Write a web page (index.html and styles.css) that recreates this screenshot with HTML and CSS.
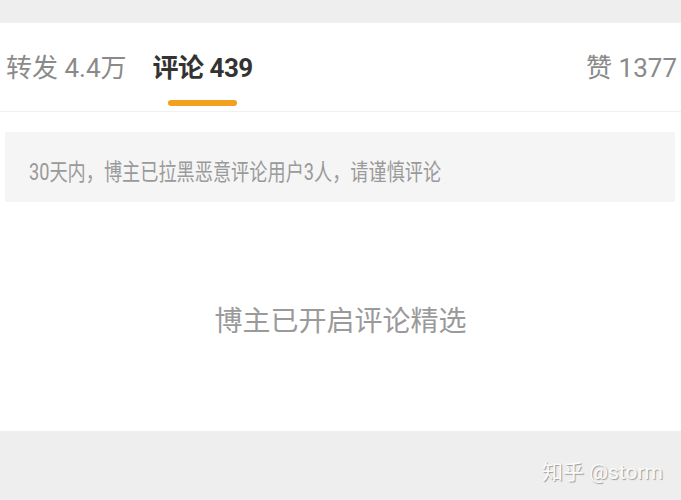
FILE: index.html
```html
<!DOCTYPE html>
<html lang="zh-CN">
<head>
  <meta charset="UTF-8">
  <meta name="viewport" content="width=device-width, initial-scale=1.0">
  <title>评论</title>
  <link rel="stylesheet" href="styles.css">
</head>
<body>
  <div class="top-gap"></div>
  <div class="panel">
    <div class="tabs">
      <div class="tab">转发 4.4万</div>
      <div class="tab active">
        <span>评论 439</span>
        <span class="bar"></span>
      </div>
      <div class="tab likes">赞 1377</div>
    </div>
    <div class="notice">
      <span class="notice-text">30天内，博主已拉黑恶意评论用户3人，请谨慎评论</span>
    </div>
    <p class="empty">博主已开启评论精选</p>
  </div>
  <div class="footer">
    <span class="mark">知乎 @storm</span>
  </div>
</body>
</html>
```

FILE: styles.css
```css
:root {
  --bg: #eeeeee;
  --card: #ffffff;
  --muted: #8a8a8a;
  --text: #333333;
  --soft: #f5f5f5;
  --accent: #f2a11e;
}

body {
  margin: 0;
  background: var(--bg);
  font-family: Roboto, "Noto Sans CJK SC", sans-serif;
}
.top-gap {
  height: 23px;
}
.panel {
  background: var(--card);
  height: 408px;
  overflow: hidden;
}
.tabs {
  display: flex;
  align-items: flex-start;
  gap: 26px;
  height: 88px;
  padding: 0 4px 0 6px;
  border-bottom: 1px solid #f1f1f1;
}
.tab {
  padding-top: 30px;
  font-size: 26px;
  line-height: 30px;
  color: var(--muted);
}
.tab.active {
  display: flex;
  flex-direction: column;
  align-items: center;
  color: var(--text);
  font-weight: bold;
  letter-spacing: -0.5px;
}
.bar {
  width: 69px;
  height: 6px;
  margin-top: 17px;
  border-radius: 3px;
  background: var(--accent);
}
.likes {
  margin-left: auto;
}
.notice {
  display: flex;
  align-items: center;
  height: 70px;
  margin: 20px 6px 0 5px;
  padding-left: 24px;
  background: var(--soft);
}
.notice-text {
  display: inline-block;
  padding-top: 6px;
  font-size: 23px;
  color: #9a9a9a;
  white-space: nowrap;
  transform: scaleX(0.79);
  transform-origin: left center;
}
.empty {
  margin: 102px 0 0;
  text-align: center;
  font-size: 28px;
  line-height: 36px;
  color: #9a9a9a;
}
.footer {
  display: flex;
  justify-content: flex-end;
  height: 69px;
  padding: 26px 18px 0 0;
  box-sizing: border-box;
}
.mark {
  font-size: 21px;
  line-height: 30px;
  color: #fafafa;
  text-shadow: 1px 1px 1px rgba(0, 0, 0, 0.35);
}
```
